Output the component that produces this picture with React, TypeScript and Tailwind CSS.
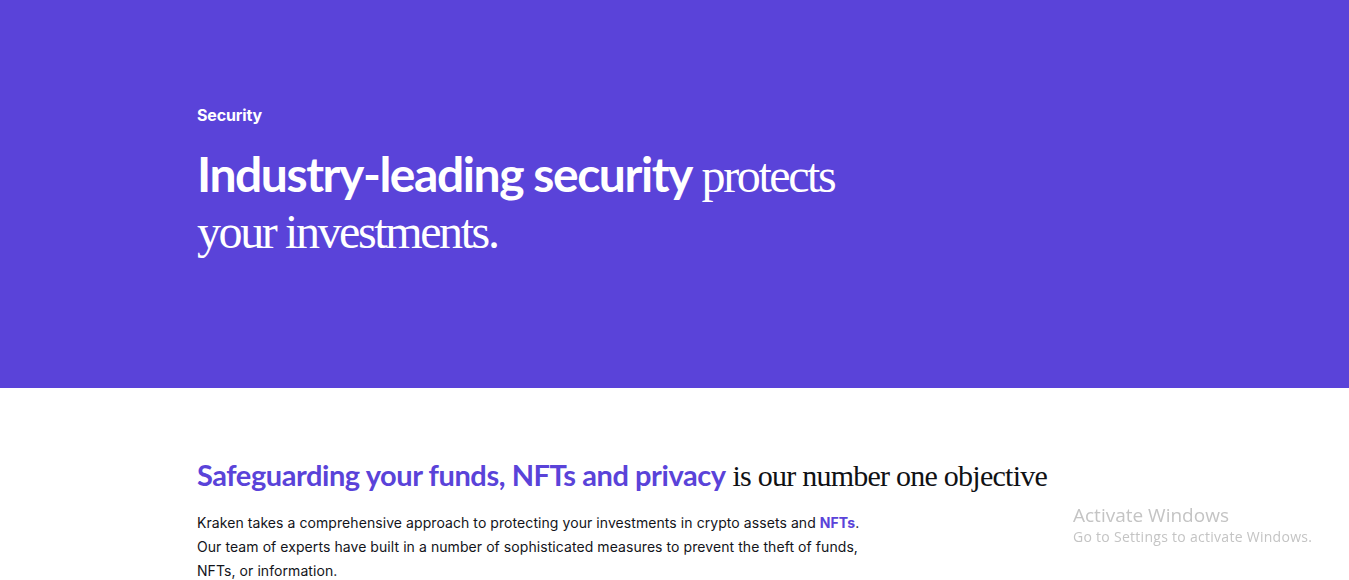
export default function App() {
  return (
    <div className="relative min-h-[580px] bg-white font-['Inter',sans-serif]">
      <section className="h-[388px] bg-[#5a43d9] pl-[197px] pt-[103px] text-white">
        <p className="text-[16px] leading-6 font-bold tracking-[-0.01em]">Security</p>
        <h1 className="mt-[21px] w-[670px] font-['Liberation_Serif',serif] text-[48px] leading-[56px] font-normal tracking-[-0.05em]">
          <span className="font-['Lato',sans-serif] leading-none font-bold tracking-[-0.03em]">
            Industry-leading security
          </span>{' '}
          protects your investments.
        </h1>
      </section>

      <section className="pl-[197px] pt-[68px]">
        <h2 className="font-['Liberation_Serif',serif] text-[30px] leading-10 tracking-[-0.025em] text-[#101114]">
          <span className="font-['Lato',sans-serif] text-[29px] leading-none font-bold tracking-[-0.015em] text-[#5a43d9]">
            Safeguarding your funds, NFTs and privacy
          </span>{' '}
          is our number one objective
        </h2>
        <p className="mt-[15px] w-[680px] text-[14px] leading-6 tracking-[0.005em] text-[#13141a]">
          Kraken takes a comprehensive approach to protecting your investments in crypto assets and{' '}
          <a className="font-bold text-[#5a43d9]">NFTs</a>. Our team of experts have built in a number of
          sophisticated measures to prevent the theft of funds, NFTs, or information.
        </p>
      </section>

      <div className="pointer-events-none fixed left-[1073px] top-[503px] font-['Open_Sans',sans-serif] text-[#c4c4c4]">
        <p className="text-[19px] leading-6">Activate Windows</p>
        <p className="text-[14px] leading-5 tracking-[0.02em]">Go to Settings to activate Windows.</p>
      </div>
    </div>
  )
}
